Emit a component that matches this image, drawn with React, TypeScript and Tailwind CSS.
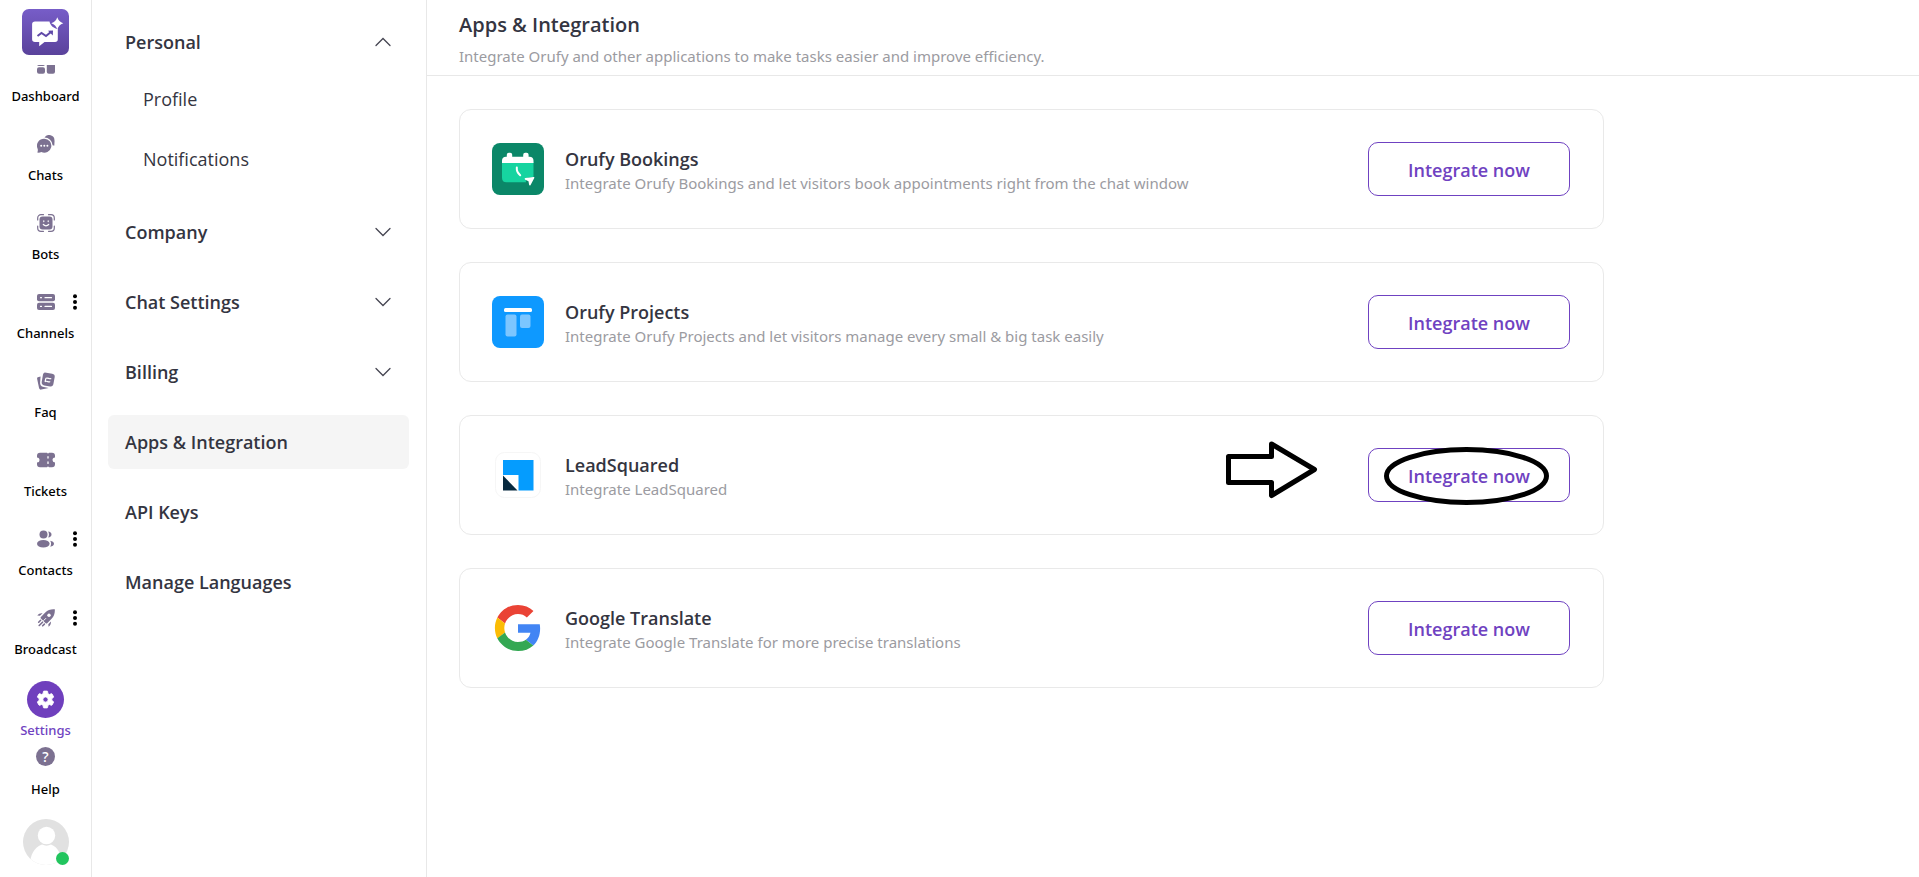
import { useState } from 'react'
import type { ReactNode } from 'react'

const ICON = 'w-[18px] h-[18px] shrink-0'

const DashboardIcon = () => (
  <svg viewBox="0 0 18 18" className={ICON} fill="#7c7191">
    <rect x="0" y="0" width="8" height="10" rx="2" />
    <rect x="10" y="0" width="8" height="6" rx="2" />
    <rect x="0" y="11.200" width="8" height="6.600" rx="2" />
    <rect x="9.800" y="7.500" width="8.200" height="10.300" rx="2" />
  </svg>
)

const ChatsIcon = () => (
  <svg viewBox="0 0 18 18" className={ICON}>
    <path fill="#7c7191" d="M7.500 2.600A5.400 5.400 0 0 1 17.500 5.500c.2 1.700-.3 3.300-.1 5-.6.1-1.200 0-1.800-.2A8.200 8.200 0 0 0 7.500 2.600Z" />
    <path fill="#7c7191" d="M7.200 3.800a7 7 0 1 1-2.900 13.300c-1.200.6-2.500.7-4.100.5.6-1.200.8-2.300.5-3.600A7 7 0 0 1 7.200 3.800Z" />
    <circle cx="4.200" cy="10.800" r="1" fill="#fff" />
    <circle cx="7.300" cy="10.800" r="1" fill="#fff" />
    <circle cx="10.400" cy="10.800" r="1" fill="#fff" />
  </svg>
)

const BotsIcon = () => (
  <svg viewBox="0 0 18 18" className={ICON} fill="none" stroke="#7c7191" strokeLinecap="round">
    <path strokeWidth="1.200" d="M.7 6V4A3.300 3.300 0 0 1 4 .7h2.500M11.500.7H14A3.300 3.300 0 0 1 17.300 4v2M17.300 12v2a3.300 3.300 0 0 1-3.300 3.300h-2.500M6.500 17.300H4A3.300 3.300 0 0 1 .7 14v-2" />
    <rect x="2.500" y="2.500" width="13" height="13" rx="3" fill="#7c7191" stroke="none" />
    <path stroke="#fff" strokeWidth="1.200" d="M6.800 6.800v.8M11.200 6.800v.8M6.300 10.500c1.600 1.700 3.800 1.700 5.400 0" />
  </svg>
)

const ChannelsIcon = () => (
  <svg viewBox="0 0 18 18" className={ICON}>
    <rect x="0" y="1" width="18" height="7.300" rx="2" fill="#7c7191" />
    <rect x="0" y="9.700" width="18" height="7.300" rx="2" fill="#7c7191" />
    <path stroke="#fff" strokeWidth="1.200" strokeLinecap="round" d="M3.500 4.700h1M8 4.700h6.500M3.500 13.400h1M8 13.400h6.500" />
  </svg>
)

const FaqIcon = () => (
  <svg viewBox="0 0 18 18" className={ICON}>
    <path fill="#7c7191" d="M3.600 4.500.8 5.200c-.6.300-.8.800-.7 1.500l1.900 9.100c.2 1.300 1 2 2.300 1.800l7.400-1.500-4.900-1.100c-2.800-.7-3.900-2.300-3.700-4.600Z" />
    <path fill="#7c7191" d="m7.800.4 7.400 1.300c1.800.3 2.800 1.500 2.500 3.300l-1.300 7c-.3 1.800-1.500 2.700-3.300 2.400l-5.800-1c-1.800-.3-2.900-1.600-2.600-3.400l1.200-6.900c.2-1.500.6-2.300 1.900-2.700Z" />
    <path stroke="#fff" strokeWidth="1.200" strokeLinecap="round" fill="none" d="M9 6.300c2-1 3 1 4.800.3M8.200 9.500c2-1 3 1 4.600.3M8.800 6.700l-.6 2.500" />
  </svg>
)

const TicketsIcon = () => (
  <svg viewBox="0 0 18 18" className={ICON}>
    <path fill="#7c7191" d="M3 1.800h7c.5 1 1.500 1 2 0h3a3 3 0 0 1 3 3v1.700a2.500 2.500 0 0 0 0 5v1.700a3 3 0 0 1-3 3h-3c-.5-1-1.500-1-2 0H3a3 3 0 0 1-3-3v-1.700a2.500 2.500 0 0 0 0-5V4.800a3 3 0 0 1 3-3Z" />
    <path stroke="#fff" strokeWidth="1.300" strokeLinecap="round" d="M11 5.700v1.400M11 11v1.400" />
  </svg>
)

const ContactsIcon = () => (
  <svg viewBox="0 0 18 18" className={ICON} fill="#7c7191">
    <circle cx="6.500" cy="4.500" r="4" />
    <ellipse cx="6.300" cy="13.800" rx="6.300" ry="3.800" />
    <path d="M11.200 1.600c2 .1 3.300 1.300 3.300 3s-1.300 2.900-3.300 3c1-1.900 1-4.100 0-6ZM13.200 10.700c2.300.3 3.800 1.500 3.800 3s-1.500 2.700-3.800 3c1.200-1.900 1.200-4.100 0-6Z" />
  </svg>
)

const RocketIcon = () => (
  <svg viewBox="0 0 18 18" className={ICON}>
    <path fill="#7c7191" d="M17.800.3c.3 3.600-.7 7-3.200 9.500l-4.400 4.400c-.5.500-1 .5-1.500 0L3.900 9.400c-.5-.5-.5-1 0-1.500l4.400-4.400C10.800 1 14.200-.1 17.800.3Z" />
    <circle cx="12" cy="6.200" r="1.700" fill="#fff" />
    <path stroke="#fff" strokeWidth="1" d="m6.500 11.700 2.500-2.500" />
    <path fill="#7c7191" d="M5.600 4.200 2.900 6.800.3 6.500C1.700 4.800 3.400 3.900 5.600 4.200ZM13.900 12.500l-2.600 2.700.3 2.600c1.700-1.400 2.600-3.100 2.300-5.300Z" />
    <path stroke="#7c7191" strokeWidth="1.600" strokeLinecap="round" d="m3.600 11.300-1.900 1.900M5.500 13.200l-3.300 3.300M7.400 15.100l-1.700 1.700" />
  </svg>
)

const GearIcon = () => (
  <svg viewBox="0 0 24 24" className="w-[21px] h-[21px]" fill="#fff">
    <path d="M19.140 12.940c.04-.3.060-.61.060-.94 0-.32-.02-.64-.07-.94l2.030-1.580a.49.49 0 0 0 .12-.61l-1.920-3.320a.488.488 0 0 0-.59-.22l-2.390.96c-.5-.38-1.030-.7-1.620-.94l-.36-2.540a.484.484 0 0 0-.48-.41h-3.840c-.24 0-.43.17-.47.41l-.36 2.540c-.59.24-1.130.57-1.620.94l-2.390-.96c-.22-.08-.47 0-.59.22L2.740 8.870c-.12.21-.08.47.12.61l2.030 1.580c-.05.3-.09.63-.09.94s.02.64.07.94l-2.030 1.580a.49.49 0 0 0-.12.61l1.920 3.320c.12.22.37.29.59.22l2.390-.96c.5.38 1.030.7 1.620.94l.36 2.540c.05.24.24.41.48.41h3.840c.24 0 .44-.17.47-.41l.36-2.540c.59-.24 1.130-.56 1.620-.94l2.390.96c.22.08.47 0 .59-.22l1.920-3.320c.12-.22.07-.47-.12-.61l-2.010-1.580ZM12 15a3 3 0 1 1 0-6 3 3 0 0 1 0 6Z" stroke="#fff" strokeWidth="1" strokeLinejoin="round" />
  </svg>
)

const MoreIcon = () => (
  <svg viewBox="0 0 4 16" className="w-1 h-4" fill="#000">
    <circle cx="2" cy="2.200" r="2" />
    <circle cx="2" cy="8" r="2" />
    <circle cx="2" cy="13.800" r="2" />
  </svg>
)

const BrandLogo = () => (
  <svg viewBox="0 0 47 46" className="w-[47px] h-[46px]">
    <defs>
      <linearGradient id="brand" x1="0" y1="0" x2="0" y2="1">
        <stop offset="0" stopColor="#775dc8" />
        <stop offset="1" stopColor="#5a429b" />
      </linearGradient>
    </defs>
    <rect width="47" height="46" rx="7" fill="url(#brand)" />
    <path fill="#fff" d="M13 12.500h14.500c.5 3.500 4 7 8.300 7.500v10.300c0 1.700-1 2.700-2.700 2.700H22.500l-5.300 4.300V33H13c-1.800 0-2.900-1-2.900-2.800V15.300c0-1.800 1.100-2.800 2.900-2.800Z" />
    <path fill="#fff" d="M35.300 8.300c1.200 3.300 2.700 4.900 6 6-3.300 1.200-4.800 2.800-6 6.100-1.200-3.300-2.700-4.900-6-6.100 3.300-1.100 4.800-2.700 6-6Z" />
    <path fill="none" stroke="#5f48a8" strokeWidth="2" d="m15.500 27 4-3 4.500 3 5.500-4.500" />
    <path fill="#5f48a8" d="m26 21.800 5-.2-.2 5Z" />
  </svg>
)

const Chevron = ({ up }: { up?: boolean }) => (
  <svg viewBox="0 0 16 10" className="w-4 h-[10px]" fill="none" stroke="#464652" strokeWidth="1.300" strokeLinecap="round">
    <path d={up ? 'M1 8.500l7-7 7 7' : 'M1 1.500l7 7 7-7'} />
  </svg>
)

const BookingsLogo = () => (
  <svg viewBox="0 0 52 52" className="w-[52px] h-[52px]">
    <rect width="52" height="52" rx="8" fill="#0b8768" />
    <path fill="#16d4a0" d="M10 19h31.500v15.500C37 33.500 33 34.500 34 39.200H14.500c-3 0-4.500-1.500-4.500-4.500Z" />
    <path fill="#fff" d="M14 13.800h.8v-2a2 2 0 0 1 2-2h1.400a2 2 0 0 1 2 2v2h11v-2a2 2 0 0 1 2-2h1.400a2 2 0 0 1 2 2v2h.9c2.500 0 4 1.500 4 4v2.200H10v-2.200c0-2.500 1.500-4 4-4Z" />
    <path fill="none" stroke="#fff" strokeWidth="2" strokeLinecap="round" d="M24.800 24.500c-.4 4 .8 5.500 3.400 7.800" />
    <path fill="#fff" d="M41.500 34c.7-.1 1 .4.800 1.100L38.600 42c-.5.900-1.300.8-1.500-.2l-.6-3.600-3.200-1.500c-.9-.4-.8-1.400.1-1.600Z" />
  </svg>
)

const ProjectsLogo = () => (
  <svg viewBox="0 0 52 52" className="w-[52px] h-[52px]">
    <rect width="52" height="52" rx="8" fill="#0e99ff" />
    <rect x="12" y="12" width="28" height="4" rx="1.500" fill="#fff" />
    <rect x="13.500" y="18.500" width="11" height="22" rx="2" fill="#7cc6ff" />
    <rect x="28" y="18.500" width="10.500" height="13.500" rx="2" fill="#7cc6ff" />
  </svg>
)

const LeadSquaredLogo = () => (
  <svg viewBox="0 0 52 52" className="w-[52px] h-[52px]">
    <rect x="3.500" y="3.500" width="45" height="45" rx="9" fill="#fff" stroke="#f6f6f6" />
    <path fill="#059cfe" d="M11 11h30.500v30.500H26.500V26H11Z" />
    <path fill="#07293f" d="M11 26.500v15h14.500Z" />
  </svg>
)

const GoogleLogo = () => (
  <svg viewBox="-3 -3 54 54" className="w-[52px] h-[52px]">
    <path fill="#ea4335" d="M24 9.500c3.540 0 6.710 1.220 9.210 3.600l6.850-6.850C35.900 2.380 30.470 0 24 0 14.620 0 6.510 5.380 2.560 13.220l7.980 6.190C12.430 13.720 17.740 9.500 24 9.500z" />
    <path fill="#4285f4" d="M46.980 24.550c0-1.570-.15-3.090-.38-4.550H24v9.020h12.940c-.58 2.960-2.260 5.480-4.780 7.180l7.730 6c4.510-4.180 7.090-10.360 7.090-17.650z" />
    <path fill="#fbbc05" d="M10.530 28.590c-.48-1.450-.76-2.990-.76-4.590s.27-3.140.76-4.590l-7.980-6.190C.92 16.460 0 20.120 0 24c0 3.880.92 7.540 2.560 10.780l7.970-6.190z" />
    <path fill="#34a853" d="M24 48c6.480 0 11.930-2.130 15.890-5.810l-7.730-6c-2.150 1.450-4.920 2.300-8.160 2.300-6.260 0-11.570-4.220-13.470-9.910l-7.980 6.190C6.510 42.620 14.620 48 24 48z" />
  </svg>
)

interface RailItem { label: string; icon: ReactNode; more?: boolean }

const RAIL: RailItem[] = [
  { label: 'Dashboard', icon: <DashboardIcon /> },
  { label: 'Chats', icon: <ChatsIcon /> },
  { label: 'Bots', icon: <BotsIcon /> },
  { label: 'Channels', icon: <ChannelsIcon />, more: true },
  { label: 'Faq', icon: <FaqIcon /> },
  { label: 'Tickets', icon: <TicketsIcon /> },
  { label: 'Contacts', icon: <ContactsIcon />, more: true },
  { label: 'Broadcast', icon: <RocketIcon />, more: true },
]

const SECTIONS = [
  { label: 'Personal', children: ['Profile', 'Notifications'] },
  { label: 'Company', children: [] },
  { label: 'Chat Settings', children: [] },
  { label: 'Billing', children: [] },
]

const PAGES = ['Apps & Integration', 'API Keys', 'Manage Languages']

const APPS = [
  { name: 'Orufy Bookings', text: 'Integrate Orufy Bookings and let visitors book appointments right from the chat window', logo: <BookingsLogo /> },
  { name: 'Orufy Projects', text: 'Integrate Orufy Projects and let visitors manage every small & big task easily', logo: <ProjectsLogo /> },
  { name: 'LeadSquared', text: 'Integrate LeadSquared', logo: <LeadSquaredLogo />, marked: true },
  { name: 'Google Translate', text: 'Integrate Google Translate for more precise translations', logo: <GoogleLogo /> },
]

const RAIL_LABEL = "font-['Noto_Sans',sans-serif] text-[13px] leading-5 font-medium"
const BODY_TEXT = "font-['Noto_Sans',sans-serif] text-[15px] leading-6 text-[#9b9ba1]"
const MENU_ROW = 'w-full h-[54px] pl-[17px] pr-[18px] flex items-center justify-between rounded-md text-lg font-semibold text-left'

function Rail() {
  return (
    <nav className="w-[92px] shrink-0 h-full flex flex-col items-center border-r border-[#e8e8e8] pt-[9px] pb-3 text-black">
      <a href="#home" aria-label="Home" className="shrink-0"><BrandLogo /></a>

      <div className="flex-1 min-h-0 w-full mt-[10px] pb-[22px] flex flex-col justify-end gap-[29px] overflow-hidden">
        {RAIL.map(item => (
          <div key={item.label} className="relative shrink-0">
            <a href={`#${item.label.toLowerCase()}`} className="flex flex-col items-center gap-3">
              {item.icon}
              <span className={RAIL_LABEL}>{item.label}</span>
            </a>
            {item.more && (
              <button aria-label={`More ${item.label}`} className="absolute top-px right-[14px]"><MoreIcon /></button>
            )}
          </div>
        ))}
      </div>

      <a href="#settings" className="flex flex-col items-center gap-[2px] text-[#6f42c1]">
        <span className="w-[37px] h-[37px] rounded-full bg-[#6f3fbd] flex items-center justify-center"><GearIcon /></span>
        <span className={RAIL_LABEL}>Settings</span>
      </a>
      <a href="#help" className="mt-[7px] flex flex-col items-center gap-[13px]">
        <span className="w-[19px] h-[19px] rounded-full bg-[#7c7191] text-white text-sm leading-none font-semibold flex items-center justify-center">?</span>
        <span className={RAIL_LABEL}>Help</span>
      </a>
      <button aria-label="Account" className="relative mt-5 w-[46px] h-[46px]">
        <svg viewBox="0 0 46 46" className="w-full h-full">
          <clipPath id="avatar"><circle cx="23" cy="23" r="23" /></clipPath>
          <g clipPath="url(#avatar)">
            <rect width="46" height="46" fill="#e1e1e1" />
            <circle cx="23.500" cy="16.500" r="8.700" fill="#fff" />
            <path fill="#fff" d="M7 46c0-10 4-17.500 12-20.500 3 1.500 6 1.500 9 0C35 28 39 36 39 46Z" />
          </g>
        </svg>
        <span className="absolute right-0 bottom-0 w-[13px] h-[13px] rounded-full bg-[#22c55e]" />
      </button>
    </nav>
  )
}

export default function App() {
  const [open, setOpen] = useState('Personal')
  const [page, setPage] = useState('Apps & Integration')

  return (
    <div className="h-screen flex bg-white font-['Open_Sans',sans-serif] text-[#343541]">
      <Rail />

      {/* Settings menu */}
      <aside className="w-[335px] shrink-0 border-r border-[#e8e8e8] pl-4 pr-[17px] pt-[15px]">
        <ul className="flex flex-col gap-4">
          {SECTIONS.map(s => (
            <li key={s.label}>
              <button onClick={() => setOpen(open === s.label ? '' : s.label)} className={MENU_ROW}>
                {s.label}
                <Chevron up={open === s.label} />
              </button>
              {open === s.label && s.children.map(c => (
                <a key={c} href={`#${c.toLowerCase()}`} className="h-[60px] pl-[35px] flex items-center text-lg">{c}</a>
              ))}
            </li>
          ))}
          {PAGES.map(p => (
            <li key={p}>
              <button onClick={() => setPage(p)} className={`${MENU_ROW} ${page === p ? 'bg-[#f5f5f5]' : ''}`}>{p}</button>
            </li>
          ))}
        </ul>
      </aside>

      <main className="flex-1 min-w-0">
        <header className="h-[76px] px-8 pt-[11px] border-b border-[#e8e8e8]">
          <h1 className="text-xl leading-7 font-semibold">Apps &amp; Integration</h1>
          <p className={`mt-[5px] ${BODY_TEXT}`}>Integrate Orufy and other applications to make tasks easier and improve efficiency.</p>
        </header>

        <div className="px-8 pt-[33px] flex flex-col gap-[33px]">
          {APPS.map(app => (
            <section key={app.name} className="w-full max-w-[1145px] h-[120px] pl-8 pr-[33px] flex items-center border border-[#e9e9e9] rounded-xl">
              {app.logo}
              <div className="ml-[21px] pt-1 flex-1 min-w-0">
                <h2 className="text-lg leading-6 font-semibold">{app.name}</h2>
                <p className={BODY_TEXT}>{app.text}</p>
              </div>
              <div className="relative shrink-0">
                <button className="w-[202px] h-[54px] pt-[2px] border border-[#6f42c1] rounded-[10px] text-lg font-semibold text-[#6f42c1]">Integrate now</button>
                {app.marked && (
                  <>
                    <svg viewBox="0 0 92 58" className="absolute -left-[142px] -top-[7px] w-[92px] h-[58px] pointer-events-none" fill="none" stroke="#000" strokeWidth="5" strokeLinejoin="round">
                      <path d="M2.500 15.500h43V3L88.500 28.500 45.500 54.500V41.500h-43Z" />
                    </svg>
                    <svg viewBox="0 0 165 58" className="absolute left-4 -top-px w-[165px] h-[58px] pointer-events-none" fill="none" stroke="#000" strokeWidth="5">
                      <ellipse cx="82.500" cy="29" rx="80" ry="26.500" />
                    </svg>
                  </>
                )}
              </div>
            </section>
          ))}
        </div>
      </main>
    </div>
  )
}
